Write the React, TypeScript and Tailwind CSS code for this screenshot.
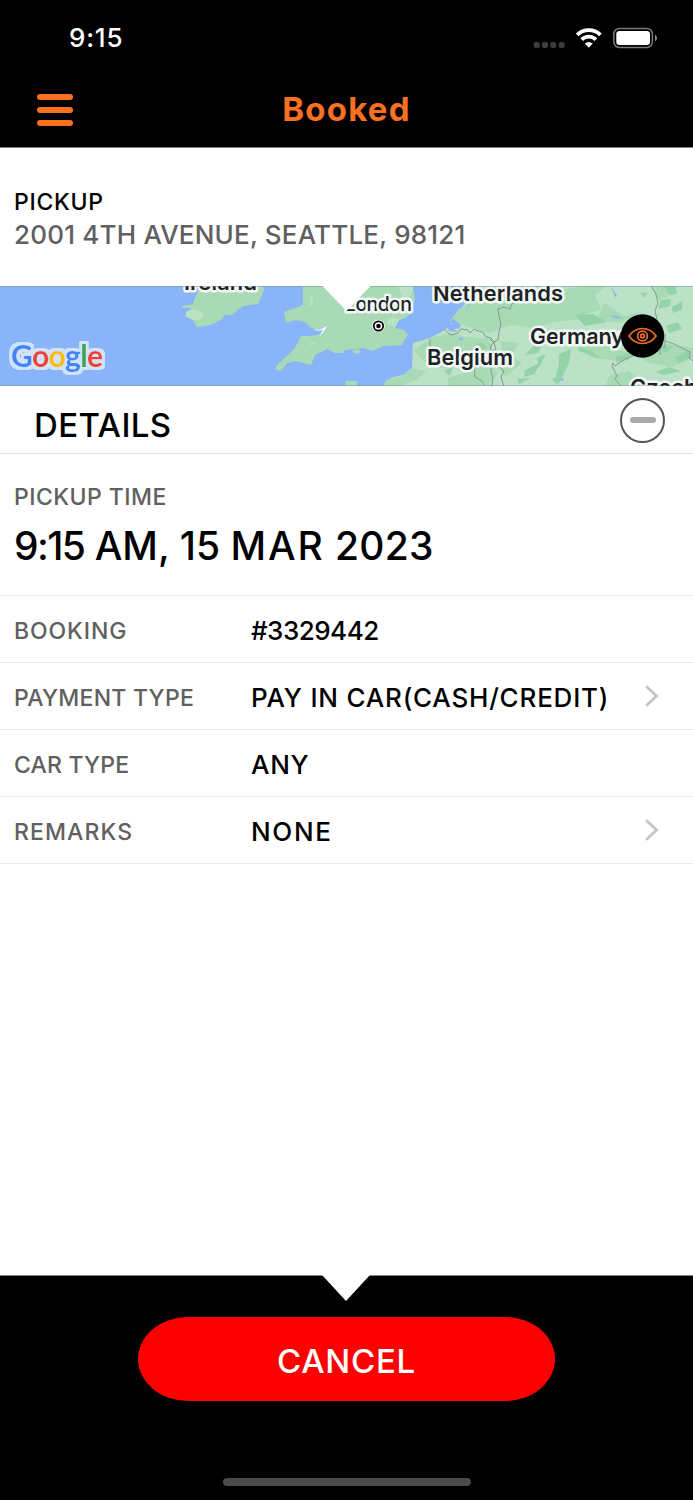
const details = [
  { label: "BOOKING", value: "#3329442", labelTracking: "tracking-[0.9px]", valueTracking: "tracking-[-0.5px]", link: false },
  { label: "PAYMENT TYPE", value: "PAY IN CAR(CASH/CREDIT)", labelTracking: "tracking-[0.25px]", valueTracking: "tracking-[0.8px]", link: true },
  { label: "CAR TYPE", value: "ANY", labelTracking: "tracking-[0.2px]", valueTracking: "tracking-[0.7px]", link: false },
  { label: "REMARKS", value: "NONE", labelTracking: "tracking-[1.1px]", valueTracking: "tracking-[1.7px]", link: true },
];

const StatusBar = () => {
  return (
    <div className="flex h-[76px] items-center justify-between pl-[69px] pr-[36px] text-white">
      <span className="text-[26px] font-medium leading-none tracking-[0.8px]">9:15</span>
      <div className="flex items-center">
        <svg width="124" height="24" viewBox="533 26 124 24">
          <g fill="#3b3b3b">
            <rect x="533.7" y="42" width="6" height="6" rx="2" />
            <rect x="542" y="42" width="6" height="6" rx="2" />
            <rect x="550.3" y="42" width="6" height="6" rx="2" />
            <rect x="558.7" y="42" width="6" height="6" rx="2" />
          </g>
          {/* Wifi */}
          <g fill="none" stroke="#fff" strokeWidth="3.9">
            <path d="M577.2 34.9a16.6 16.6 0 0 1 23.2 0" />
            <path d="M581.7 39.6a10 10 0 0 1 14.2 0" />
          </g>
          <path d="M588.8 47.8l-4-4.2a5.9 5.9 0 0 1 8 0z" fill="#fff" />
          {/* Battery */}
          <rect x="613.8" y="28.5" width="38.6" height="19" rx="5.5" fill="none" stroke="#7a7a7a" strokeWidth="1.5" />
          <rect x="616.3" y="31" width="33.7" height="14" rx="3.2" fill="#fff" />
          <path d="M655 34.7c2.6 1.3 2.6 5.3 0 6.6z" fill="#8a8a8a" />
        </svg>
      </div>
    </div>
  );
};

const MapStrip = () => {
  return (
    <svg className="block h-[100px] w-full" viewBox="0 286 693 100">
      <defs>
        <filter id="halo" x="-10%" y="-20%" width="120%" height="140%">
          <feMorphology in="SourceAlpha" operator="dilate" radius="2.6" result="grown" />
          <feGaussianBlur in="grown" stdDeviation="0.6" result="soft" />
          <feFlood floodColor="#d3e2fb" />
          <feComposite in2="soft" operator="in" result="edge" />
          <feMerge>
            <feMergeNode in="edge" />
            <feMergeNode in="SourceGraphic" />
          </feMerge>
        </filter>
      </defs>
      <rect x="0" y="286" width="693" height="100" fill="#89b4f8" />
      {/* Ireland */}
      <path d="M201 286L194 300L193 304L182 306L183 308L192 308L186 313L185 316L193 320L197 327L211 325L221 320L225 315L232 315L238 310L243 306L258 304L260 299L264 290L263 286Z" fill="#a8dab5" />
      <path d="M186 312L192 309L203 312L203 318L198 320L193 320L186 316Z" fill="#bbe2c6" />
      {/* Great Britain */}
      <path d="M303 286L303 305L295 308L284 312L286 323L296 320L305 322L310 327L318 330L329 324L323 334L310 336L301 336L295 348L285 358L278 364L275 369L281 371L287 363L295 361L311 365L315 355L327 349L335 353L343 353L345 350L363 348L373 351L383 346L402 345L405 339L408 335L404 330L395 328L397 321L405 318L412 313L413 303L415 299L413 286Z" fill="#a8dab5" />
      <path d="M309 296l4 2v7l-4 2 2-6zM398 286h15l-4 16-7-5zM390 318l10 1-5 8-9-3zM311 342l5 1-6 3zM361 302l12-2-4 5z" fill="#bbe2c6" />
      <path d="M313 329l6 1 9-5-5 8-4 3 4-6-5 1z" fill="#f4f8fa" />
      <path d="M346 381h11v5h-12zM352 351l6-2 3 3-5 2z" fill="#a8dab5" />
      {/* Continent */}
      <path d="M474 286L470 296L463 306L454 317L452 323L445 330L430 338L413 343L412 368L403 375L394 377L387 380L383 386H693V286Z" fill="#bbe2c6" />
      <g fill="#a8dab5">
        <path d="M475 300l14 4 25-6 24 6 15-8 18 10 13 13-30 3-21 6-22-3-23 8-18-6-20-6 9-12z" />
        <path d="M431 338l19-5 16 4 24 2 3 12-10 9-21-2-16 11-18-5-10-8-4-6z" />
        <path d="M413 368l13 3-9 9-17 6h-17l5-6 15-4z" />
        <path d="M448 378l19-6 8-15 11 2 12 14-9 11 6 2h-47zM500 341l19 2-8 12 11 8-16 13-11-10 8-12z" />
        <path d="M560 290l23-4h24l-12 9 6 14-23 8-22-9zM604 303l20 13 18-5-20 12-25-3zM579 344l21-3 16 9 20 2-19 9-26-4-14-9zM637 352l30-8 26 4v9l-21 10-26-5zM651 286h26l-9 10-10 4zM609 376l20-5 10 9-5 6h-28z" />
      </g>
      <g fill="#94d2a7">
        <path d="M575 315l18-1 14 8-22 4zM578 347l14 4 8 8-21-8zM661 300l10-1-1 7-12 3zM665 287l10-1 2 8-8 1zM672 307l11-6-1 9-9 3zM666 326l12-4 4 7-13 4z" />
        <path d="M559 354l12-5-2 14-5 10-6 12-2-10 3-10zM535 344l7 1-4 8-13 2zM525 370l17-8-8 12-10 3zM537 358l9-4-7 13zM517 379l14-1-12 6zM552 379l9-4-4 10zM616 357l18-5-6 8-12 2zM652 347l22-1-8 6zM674 358l14-7 5 6-14 6z" />
        <path d="M480 342l7 5-7 5-7-5zM444 371l9-4-3 9zM655 372l14-5 12 4-17 4zM641 292l7 1-5 5z" />
      </g>
      <g fill="#89b4f8">
        <path d="M447 326l8-3 5 5-6 1 4 3-9-1zM452 318l9 7-2 4-7-6zM458 339l5-2-1 4zM611 286l6 10-2 1zM609 315l8 1 7 3-8-1zM558 380l5-2 1 3zM470 301l3-1-6 9z" />
      </g>
      <g fill="none" stroke="#879b90" strokeWidth="1">
        <path d="M430 339v8l3 6M445 330l6 5 7-2 3-4 7 1 2 3 4-4 4 2 5 1 3 5 5 1 3 4 4-2 1-8 2-8-2-8-1-7 6-2 6 2 2-5 6-3-3-5 6-5" />
        <path d="M490 339l4 4 2 6-6 3 1-7 5-4M471 355l3 8 1 14 7 4 3 5M490 352l1 20 2 5-1 9M496 350l-1 11 4 5 5 5-3 6 3 9" />
        <path d="M651 286l5 8 2 9-3 8 2 8-1 10 4 6 5-1v13h-5v8M665 341l9 3 10 5 6 3-1 6 4 3M635 355l-10 4-10 7-2-3-1 3 5 10-2 3 5 6 1 4" />
      </g>
      <g
        className="font-['Inter',sans-serif]"
        fill="#202124"
        stroke="#f1f8f4"
        strokeWidth="5"
        strokeLinejoin="round"
        fontSize="22"
        fontWeight="600"
        paintOrder="stroke"
      >
        <text x="184" y="289.5" textLength="73">Ireland</text>
        <text x="345" y="310.5" fontSize="19.5" fontWeight="500" textLength="67">London</text>
        <text x="433" y="300.5" textLength="130">Netherlands</text>
        <text x="427" y="365" textLength="86">Belgium</text>
        <text x="530" y="343.5" textLength="94">Germany</text>
        <text x="630" y="395" textLength="86">Czechia</text>
      </g>
      <circle cx="378.5" cy="326" r="6.2" fill="#fff" />
      <circle cx="378.5" cy="326" r="4.7" fill="#fff" stroke="#000" strokeWidth="1.7" />
      <circle cx="378.5" cy="326" r="2.3" fill="#000" />
      <path d="M322.5 286H370.5L346.5 311Z" fill="#fff" />
      {/* Google logo */}
      <text
        className="font-['Lato',sans-serif]"
        x="11"
        y="367"
        fontSize="30"
        filter="url(#halo)"
        textLength="92"
        fontWeight="700"
      >
        <tspan fill="#4285f4">G</tspan>
        <tspan fill="#ea4335">o</tspan>
        <tspan fill="#fbbc04">o</tspan>
        <tspan fill="#4285f4">g</tspan>
        <tspan fill="#34a853">l</tspan>
        <tspan fill="#ea4335">e</tspan>
      </text>
      {/* Preview button */}
      <circle cx="642.5" cy="336" r="21.7" fill="#000" />
      <g fill="none" stroke="#f37021" strokeWidth="1.7">
        <path d="M629 336c7-10 20-10 27 0c-7 10-20 10-27 0z" />
        <circle cx="642.5" cy="336" r="4.9" />
        <circle cx="642.5" cy="336" r="1.9" />
      </g>
      <path d="M0 286.5H323M370 286.5H693M0 385.5H693" stroke="#5f7a8c" strokeOpacity=".35" />
    </svg>
  );
};

const App = () => {
  return (
    <main className="flex h-[1500px] w-[693px] flex-col overflow-hidden bg-white font-['Inter',sans-serif] text-black">
      <header className="h-[148px] border-b border-[#808080] bg-black">
        <StatusBar />
        <div className="grid h-[67px] grid-cols-[1fr_auto_1fr] items-center">
          <button className="ml-[37px] flex w-9 flex-col gap-[7px]" aria-label="Menu">
            <span className="h-1.5 w-full rounded-full bg-[#f97020]" />
            <span className="h-1.5 w-full rounded-full bg-[#f97020]" />
            <span className="h-1.5 w-full rounded-full bg-[#f97020]" />
          </button>
          <h1 className="text-[33px] font-bold leading-none tracking-[1.2px] text-[#f97020]">Booked</h1>
        </div>
      </header>

      <section className="h-[138px] px-3.5 pt-[38px] font-medium">
        <h2 className="text-[23px] leading-8 tracking-[0.7px]">PICKUP</h2>
        <p className="whitespace-nowrap text-[26px] leading-[34px] tracking-[0.2px] text-[#606060]">
          2001 4TH AVENUE, SEATTLE, 98121
        </p>
      </section>

      <MapStrip />

      <section className="flex h-[68px] items-start justify-between border-b border-[#e2e2e2] pl-[34px] pr-7">
        <h2 className="pt-[19px] text-[33px] font-medium leading-10 tracking-[0.4px]">DETAILS</h2>
        <button className="mt-[11.5px] flex size-[45px] items-center justify-center rounded-full border-2 border-[#555]" aria-label="Collapse">
          <span className="mb-px h-1.5 w-[26px] rounded-full bg-[#aaa]" />
        </button>
      </section>

      <section className="h-[142px] border-b border-[#ececec] px-3.5 pt-[27px] font-medium">
        <h3 className="text-[23px] leading-8 tracking-[0.45px] text-[#606060]">PICKUP TIME</h3>
        <p className="mt-2 whitespace-nowrap text-[39px] leading-[50px]">
          <span className="tracking-[-1.6px]">9:15</span> AM, 15 <span className="tracking-[1.9px]">MAR</span> <span className="tracking-[0.2px]">2023</span>
        </p>
      </section>

      {details.map((row) => (
        <div key={row.label} className="flex h-[67px] items-center border-b border-[#ececec] pl-3.5 pr-[34px] font-medium">
          <span className={`w-[237px] pt-[3px] text-[23px] leading-8 text-[#606060] ${row.labelTracking}`}>{row.label}</span>
          <span className={`flex-1 whitespace-nowrap pt-[3px] text-[26px] leading-8 ${row.valueTracking}`}>{row.value}</span>
          {row.link && (
            <svg width="14" height="22" viewBox="0 0 14 22" fill="none" stroke="#c4c4c4" strokeWidth="2.8">
              <path d="M2 2L11.5 11L2 20" strokeLinecap="round" />
            </svg>
          )}
        </div>
      ))}

      <footer className="mt-auto flex h-[225px] flex-col items-center border-t border-[#808080] bg-black">
        <svg className="-mt-px" width="49" height="26" viewBox="0 0 49 26">
          <path d="M0 0H48L24 26Z" fill="#fff" />
        </svg>
        <button className="mt-4 h-[84px] w-[417px] rounded-[50px/42px] bg-[#ff0000] pt-[5px] text-[33px] font-medium tracking-[0.7px] text-white">
          CANCEL
        </button>
        <div className="mt-[77px] h-2 w-[248px] rounded-full bg-[#4b4b4b]" />
      </footer>
    </main>
  );
};

export default App;
